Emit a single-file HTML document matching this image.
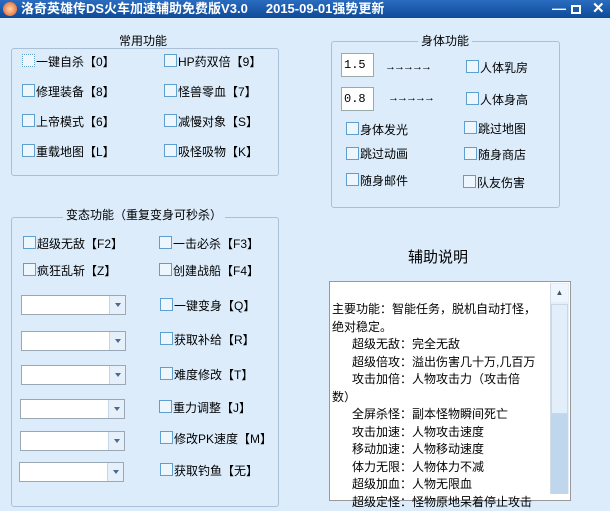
<!DOCTYPE html>
<html><head><meta charset="utf-8"><style>
*{margin:0;padding:0;box-sizing:border-box}
body{width:610px;height:494px;overflow:hidden;background:#dcecfb;font-family:"Liberation Sans","Noto Sans CJK SC","WenQuanYi Zen Hei",sans-serif;font-size:12px;color:#000;position:relative}
.a{position:absolute;white-space:nowrap}
.title{left:0;top:0;width:610px;height:18px;background:linear-gradient(#2a6cc0,#0e4a98);color:#fff;font-weight:bold;font-size:13px;line-height:18px}
.grp{position:absolute;border:1px solid #a9c0d8;border-radius:3px}
.gt{position:absolute;background:#dcecfb;padding:0 3px;font-size:12px;line-height:14px}
.cb{position:absolute;width:13px;height:13px;border:1px solid #5f9fd0;background:#eef6fd}
.lb{position:absolute;white-space:nowrap;line-height:14px}
.cmb{position:absolute;width:105px;height:20px;border:1px solid #9aa7b5;background:#fff}
.cmb i{position:absolute;right:0;top:0;width:16px;height:18px;background:#e6f0fa;border-left:1px solid #c5d6e8}
.cmb i:after{content:"";position:absolute;left:5px;top:7px;border:3px solid transparent;border-top:4px solid #4a6a90}
.inp{position:absolute;width:33px;height:24px;border:1px solid #9aa;background:#fff;font-family:"Liberation Mono",monospace;font-size:12px;line-height:22px;padding-left:2px}
.arr{position:absolute;font-size:11px;letter-spacing:-2px;font-weight:bold}
</style></head><body>
<div class="a title"><span style="position:absolute;left:3px;top:2px;width:14px;height:14px;border-radius:50%;background:radial-gradient(#ffd9a0,#e0522a)"></span><span style="position:absolute;left:21px">洛奇英雄传DS火车加速辅助免费版V3.0&nbsp;&nbsp;&nbsp;&nbsp;&nbsp;2015-09-01强势更新</span><span style="position:absolute;left:552px;top:-1px;font-size:14px">—</span><span style="position:absolute;left:571px;top:5px;width:10px;height:9px;border:2px solid #fff"></span><span style="position:absolute;left:592px;font-size:15px">✕</span></div>

<div class="grp" style="left:11px;top:48px;width:268px;height:128px"></div>
<div class="gt" style="left:116px;top:34px">常用功能</div>
<div class="cb" style="left:22px;top:54px;border-style:dotted"></div><div class="lb" style="left:36px;top:55px">一键自杀【0】</div>
<div class="cb" style="left:22px;top:84px"></div><div class="lb" style="left:36px;top:85px">修理装备【8】</div>
<div class="cb" style="left:22px;top:114px"></div><div class="lb" style="left:36px;top:115px">上帝模式【6】</div>
<div class="cb" style="left:22px;top:144px"></div><div class="lb" style="left:36px;top:145px">重载地图【L】</div>
<div class="cb" style="left:164px;top:54px"></div><div class="lb" style="left:178px;top:55px">HP药双倍【9】</div>
<div class="cb" style="left:164px;top:84px"></div><div class="lb" style="left:178px;top:85px">怪兽零血【7】</div>
<div class="cb" style="left:164px;top:114px"></div><div class="lb" style="left:178px;top:115px">减慢对象【S】</div>
<div class="cb" style="left:164px;top:144px"></div><div class="lb" style="left:178px;top:145px">吸怪吸物【K】</div>

<div class="grp" style="left:331px;top:41px;width:229px;height:167px"></div>
<div class="gt" style="left:418px;top:34px">身体功能</div>
<div class="inp" style="left:341px;top:53px">1.5</div><div class="arr" style="left:385px;top:61px">→→→→→</div>
<div class="inp" style="left:341px;top:87px">0.8</div><div class="arr" style="left:388px;top:92px">→→→→→</div>
<div class="cb" style="left:466px;top:60px"></div><div class="lb" style="left:480px;top:61px">人体乳房</div>
<div class="cb" style="left:466px;top:92px"></div><div class="lb" style="left:480px;top:93px">人体身高</div>
<div class="cb" style="left:346px;top:122px"></div><div class="lb" style="left:360px;top:123px">身体发光</div>
<div class="cb" style="left:346px;top:147px"></div><div class="lb" style="left:360px;top:147px">跳过动画</div>
<div class="cb" style="left:346px;top:173px"></div><div class="lb" style="left:360px;top:174px">随身邮件</div>
<div class="cb" style="left:464px;top:121px"></div><div class="lb" style="left:478px;top:122px">跳过地图</div>
<div class="cb" style="left:464px;top:147px"></div><div class="lb" style="left:478px;top:148px">随身商店</div>
<div class="cb" style="left:463px;top:175px"></div><div class="lb" style="left:477px;top:176px">队友伤害</div>

<div class="grp" style="left:11px;top:217px;width:268px;height:290px"></div>
<div class="gt" style="left:63px;top:208px">变态功能（重复变身可秒杀）</div>
<div class="cb" style="left:23px;top:236px"></div><div class="lb" style="left:37px;top:237px">超级无敌【F2】</div>
<div class="cb" style="left:23px;top:263px"></div><div class="lb" style="left:37px;top:264px">疯狂乱斩【Z】</div>
<div class="cb" style="left:159px;top:236px"></div><div class="lb" style="left:173px;top:237px">一击必杀【F3】</div>
<div class="cb" style="left:159px;top:263px"></div><div class="lb" style="left:173px;top:264px">创建战船【F4】</div>
<div class="cmb" style="left:21px;top:295px"><i></i></div>
<div class="cmb" style="left:21px;top:331px"><i></i></div>
<div class="cmb" style="left:21px;top:365px"><i></i></div>
<div class="cmb" style="left:20px;top:399px"><i></i></div>
<div class="cmb" style="left:20px;top:431px"><i></i></div>
<div class="cmb" style="left:19px;top:462px"><i></i></div>
<div class="cb" style="left:160px;top:298px"></div><div class="lb" style="left:174px;top:299px">一键变身【Q】</div>
<div class="cb" style="left:160px;top:332px"></div><div class="lb" style="left:174px;top:333px">获取补给【R】</div>
<div class="cb" style="left:160px;top:367px"></div><div class="lb" style="left:174px;top:368px">难度修改【T】</div>
<div class="cb" style="left:159px;top:400px"></div><div class="lb" style="left:173px;top:401px">重力调整【J】</div>
<div class="cb" style="left:160px;top:431px"></div><div class="lb" style="left:174px;top:432px">修改PK速度【M】</div>
<div class="cb" style="left:160px;top:463px"></div><div class="lb" style="left:174px;top:464px">获取钓鱼【无】</div>

<div class="lb" style="left:408px;top:249px;font-size:15px;line-height:18px">辅助说明</div>
<div style="position:absolute;left:329px;top:281px;width:242px;height:220px;border:1px solid #999;background:#fff"></div>
<div style="position:absolute;left:550px;top:283px;width:19px;height:211px;background:#e4eef8;border-left:1px solid #d0dce8"></div>
<div style="position:absolute;left:551px;top:284px;width:17px;height:18px;background:#eef5fc;font-size:8px;text-align:center;color:#456;line-height:18px">▲</div>
<div style="position:absolute;left:551px;top:304px;width:17px;height:110px;background:#e2eefa;border:1px solid #c8d8e8"></div>
<div style="position:absolute;left:551px;top:414px;width:17px;height:80px;background:#c0d6ec"></div>
<div class="lb" style="left:332px;top:301px;line-height:17.5px">主要功能：智能任务，脱机自动打怪，<br>绝对稳定。<br>&nbsp;&nbsp;&nbsp;&nbsp;&nbsp;&nbsp;超级无敌：完全无敌<br>&nbsp;&nbsp;&nbsp;&nbsp;&nbsp;&nbsp;超级倍攻：溢出伤害几十万,几百万<br>&nbsp;&nbsp;&nbsp;&nbsp;&nbsp;&nbsp;攻击加倍：人物攻击力（攻击倍<br>数）<br>&nbsp;&nbsp;&nbsp;&nbsp;&nbsp;&nbsp;全屏杀怪：副本怪物瞬间死亡<br>&nbsp;&nbsp;&nbsp;&nbsp;&nbsp;&nbsp;攻击加速：人物攻击速度<br>&nbsp;&nbsp;&nbsp;&nbsp;&nbsp;&nbsp;移动加速：人物移动速度<br>&nbsp;&nbsp;&nbsp;&nbsp;&nbsp;&nbsp;体力无限：人物体力不减<br>&nbsp;&nbsp;&nbsp;&nbsp;&nbsp;&nbsp;超级加血：人物无限血<br>&nbsp;&nbsp;&nbsp;&nbsp;&nbsp;&nbsp;超级定怪：怪物原地呆着停止攻击</div>
</body></html>
